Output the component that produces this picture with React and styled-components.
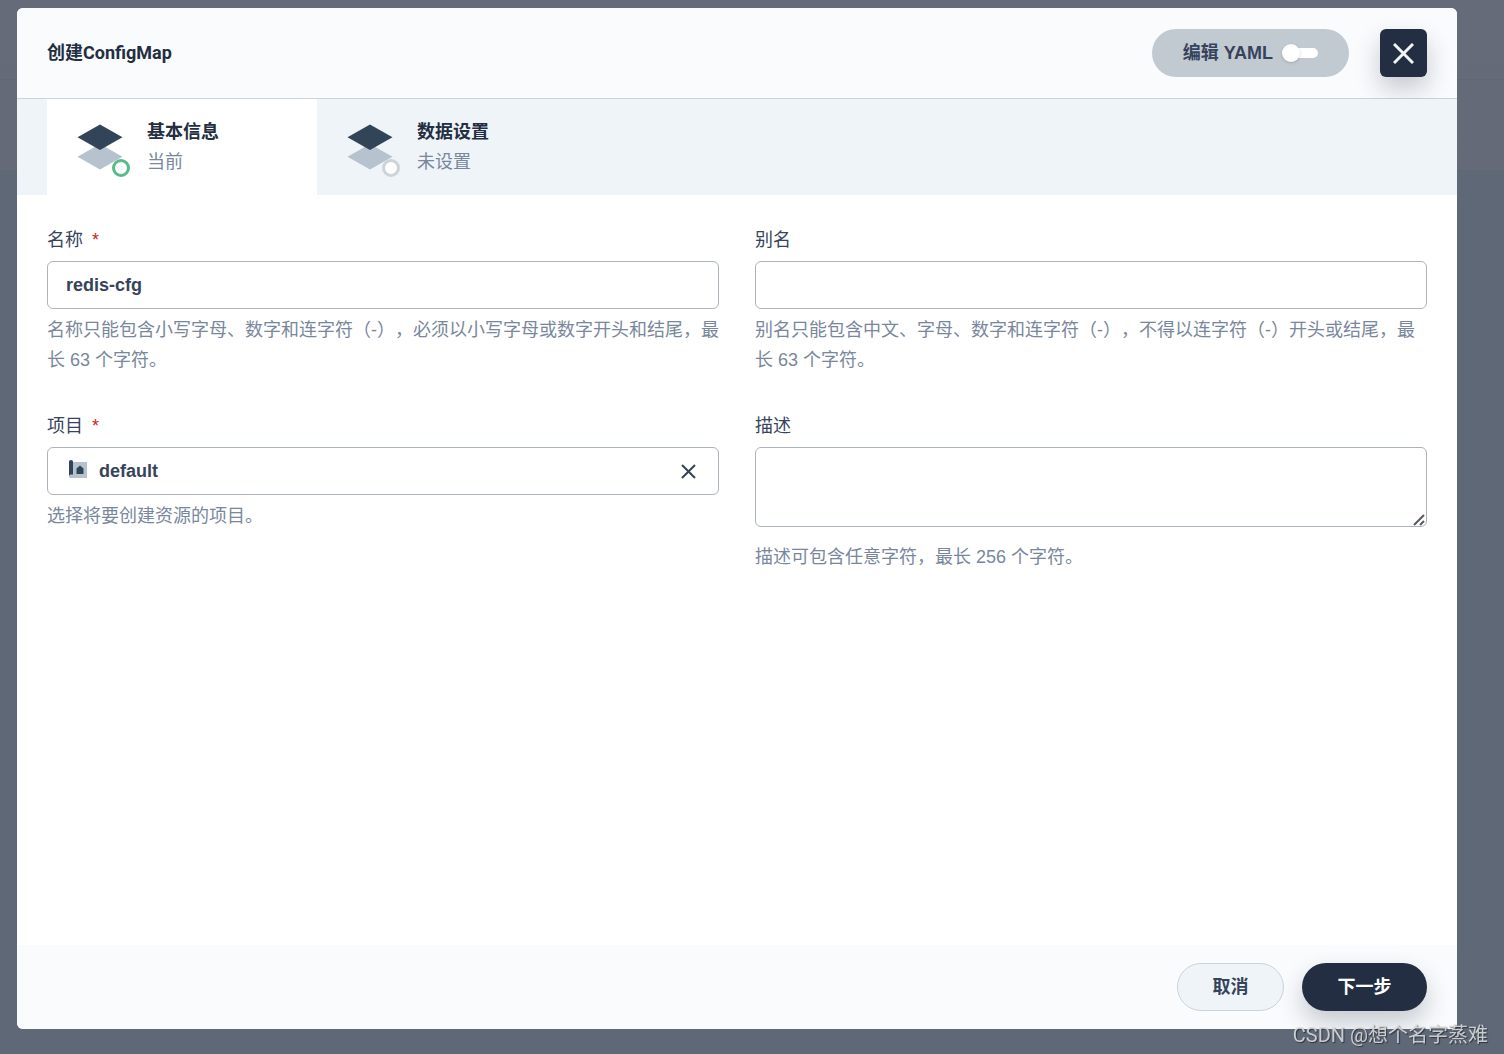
import React, { useState } from "react";
import styled, { createGlobalStyle } from "styled-components";

const GlobalStyle = createGlobalStyle`
  *, *::before, *::after { box-sizing: border-box; }
  html { text-spacing-trim: space-all; }
  body {
    margin: 0;
    color: #36435c;
    font-family: "Liberation Sans", "Noto Sans CJK SC", sans-serif;
    font-size: 18px;
    line-height: 30px;
  }
  button, input, select, textarea { font: inherit; color: inherit; margin: 0; }
`;

const Backdrop = styled.div`
  display: flex;
  min-height: 100vh;
  padding: 8px 47px 25px 17px;
  background-color: #5f6877;
  background-image:
    linear-gradient(#5f6675, #5f6675),
    linear-gradient(#666b79, #656a78),
    linear-gradient(#5c6473, #5f6877);
  background-size: 100% 1px, 100% 170px, 100% 180px;
  background-position: 0 79px, 0 0, 0 0;
  background-repeat: no-repeat;
`;

const Dialog = styled.form`
  flex: 1;
  min-width: 0;
  display: flex;
  flex-direction: column;
  overflow: hidden;
  border-radius: 6px;
  background: #fff;
`;

const Header = styled.header`
  display: flex;
  align-items: center;
  gap: 31px;
  padding: 21px 30px;
  border-bottom: 1px solid #ccd3db;
  background: #f9fbfd;
`;

const Title = styled.h1`
  flex: 1;
  margin: 0;
  color: #242e42;
  font-family: Roboto, "Noto Sans CJK SC", sans-serif;
  font-size: 18px;
  font-weight: 700;
`;

const YamlToggle = styled.label`
  display: flex;
  align-items: center;
  gap: 9px;
  height: 48px;
  padding: 0 31px;
  border-radius: 24px;
  background: #c1c9d1;
  font-weight: 700;
  cursor: pointer;
`;

const Switch = styled.input`
  appearance: none;
  position: relative;
  width: 36px;
  height: 18px;
  cursor: pointer;
  &::before {
    content: "";
    position: absolute;
    inset: 4px 0 4px 4px;
    border-radius: 5px;
    background: #fff;
  }
  &::after {
    content: "";
    position: absolute;
    top: 0;
    left: ${(p) => (p.checked ? "18px" : "0")};
    width: 18px;
    height: 18px;
    border-radius: 50%;
    background: #fff;
    box-shadow: 0 1px 3px rgba(36, 46, 66, 0.2);
  }
`;

const CloseButton = styled.button`
  display: flex;
  align-items: center;
  justify-content: center;
  width: 47px;
  height: 48px;
  padding: 0;
  border: 0;
  border-radius: 6px;
  background: #242e42;
  box-shadow: 0 12px 24px rgba(36, 46, 66, 0.24);
  cursor: pointer;
`;

const Steps = styled.nav`
  display: flex;
  padding: 0 30px;
  background: #eff4f9;
`;

const Step = styled.button`
  display: flex;
  align-items: center;
  gap: 24px;
  width: 270px;
  padding: 18px 30px;
  border: 0;
  background: ${(p) => (p.$current ? "#fff" : "transparent")};
  text-align: left;
  cursor: pointer;
`;

const StepText = styled.span`
  display: flex;
  flex-direction: column;
  color: #79879c;
`;

const StepName = styled.strong`
  color: #242e42;
  font-weight: 700;
`;

const StepSvg = styled.svg`
  display: block;
  overflow: visible;
`;

const Body = styled.main`
  flex: 1;
  display: grid;
  grid-template-columns: 1fr 1fr;
  align-content: start;
  gap: 36px;
  padding: 30px;
`;

const Field = styled.div`
  display: flex;
  flex-direction: column;
  gap: 6px;
  min-width: 0;
`;

const Label = styled.label`
  display: block;
`;

const Required = styled.span`
  margin-left: 9px;
  color: #ca2621;
`;

const Control = styled.div`
  position: relative;
  display: flex;
  ${(p) => p.$tall && "margin-bottom: 9px;"}
`;

const controlStyle = `
  display: block;
  width: 100%;
  border: 1px solid #abb4be;
  border-radius: 6px;
  background: #fff;
  font-weight: 700;
  outline: none;
  &:focus { border-color: #329dce; }
`;

const TextInput = styled.input`
  ${controlStyle}
  height: 48px;
  padding: 0 18px;
`;

const Select = styled.select`
  ${controlStyle}
  appearance: none;
  height: 48px;
  padding: 0 54px 0 51px;
`;

const TextArea = styled.textarea`
  ${controlStyle}
  height: 80px;
  padding: 9px 18px;
  resize: vertical;
  &::-webkit-resizer { background: transparent; }
`;

const Hint = styled.p`
  margin: 0;
  color: #79879c;
`;

const ProjectMark = styled.svg`
  position: absolute;
  left: 21px;
  top: 13px;
  pointer-events: none;
`;

const ClearButton = styled.button`
  position: absolute;
  right: 19px;
  top: 12px;
  display: flex;
  align-items: center;
  justify-content: center;
  width: 24px;
  height: 24px;
  padding: 0;
  border: 0;
  background: transparent;
  cursor: pointer;
`;

const Grip = styled.svg`
  position: absolute;
  right: 2px;
  bottom: 1px;
  pointer-events: none;
`;

const Footer = styled.footer`
  display: flex;
  justify-content: flex-end;
  gap: 18px;
  padding: 18px 30px;
  background: #f9fbfd;
`;

const ActionButton = styled.button`
  min-width: ${(p) => (p.$primary ? "125px" : "107px")};
  height: 48px;
  padding: 0 30px;
  border: ${(p) => (p.$primary ? "0" : "1px solid #ccd3db")};
  border-radius: 24px;
  background: ${(p) => (p.$primary ? "#242e42" : "#eff4f9")};
  color: ${(p) => (p.$primary ? "#fff" : "#36435c")};
  box-shadow: ${(p) => (p.$primary ? "0 12px 24px rgba(36, 46, 66, 0.24)" : "none")};
  font-weight: 700;
  cursor: pointer;
`;

const Watermark = styled.div`
  position: fixed;
  right: 16px;
  bottom: 4px;
  color: rgba(215, 217, 220, 0.9);
  font-family: Roboto, "Noto Sans CJK SC", sans-serif;
  font-size: 20px;
  text-shadow: 1px 1px 1px rgba(0, 0, 0, 0.5);
  pointer-events: none;
`;

function Cross({ size, width, color }) {
  const end = size - 1;
  return (
    <svg width={size} height={size} viewBox={`0 0 ${size} ${size}`} aria-hidden="true">
      <path d={`M1 1L${end} ${end}M${end} 1L1 ${end}`} stroke={color} strokeWidth={width} fill="none" />
    </svg>
  );
}

function StepIcon({ ring }) {
  return (
    <StepSvg width="46" height="46" viewBox="0 0 46 46" aria-hidden="true">
      <path d="M23 20L45.500 32.800L23 45.500L.5 32.800Z" fill="#b6c2cd" />
      <path d="M23 .5L45.500 13.300L23 26L.5 13.300Z" fill="#324558" />
      <circle cx="44" cy="44" r="7.500" fill="#fff" stroke={ring} strokeWidth="3" />
    </StepSvg>
  );
}

const steps = [
  { name: "基本信息", state: "当前", ring: "#55bc8a" },
  { name: "数据设置", state: "未设置", ring: "#ccd3db" },
];

export default function App() {
  const [yaml, setYaml] = useState(false);
  const [project, setProject] = useState("default");

  return (
    <>
      <GlobalStyle />
      <Backdrop>
        <Dialog onSubmit={(e) => e.preventDefault()}>
          <Header>
            <Title>创建ConfigMap</Title>
            <YamlToggle htmlFor="yaml">
              编辑 YAML
              <Switch id="yaml" type="checkbox" role="switch" checked={yaml} onChange={(e) => setYaml(e.target.checked)} />
            </YamlToggle>
            <CloseButton type="button" aria-label="关闭">
              <Cross size={21} width={3} color="#f1f3f5" />
            </CloseButton>
          </Header>

          <Steps>
            {steps.map((step, i) => (
              <Step key={step.name} type="button" $current={i === 0}>
                <StepIcon ring={step.ring} />
                <StepText>
                  <StepName>{step.name}</StepName>
                  <span>{step.state}</span>
                </StepText>
              </Step>
            ))}
          </Steps>

          <Body>
            <Field>
              <Label htmlFor="name">
                名称<Required>*</Required>
              </Label>
              <Control>
                <TextInput id="name" type="text" defaultValue="redis-cfg" />
              </Control>
              <Hint>名称只能包含小写字母、数字和连字符（-），必须以小写字母或数字开头和结尾，最长 63 个字符。</Hint>
            </Field>

            <Field>
              <Label htmlFor="alias">别名</Label>
              <Control>
                <TextInput id="alias" type="text" />
              </Control>
              <Hint>别名只能包含中文、字母、数字和连字符（-），不得以连字符（-）开头或结尾，最长 63 个字符。</Hint>
            </Field>

            <Field>
              <Label htmlFor="project">
                项目<Required>*</Required>
              </Label>
              <Control>
                <Select id="project" value={project} onChange={(e) => setProject(e.target.value)}>
                  <option value="" hidden />
                  <option value="default">default</option>
                </Select>
                <ProjectMark width="20" height="18" viewBox="0 0 20 18" aria-hidden="true">
                  <path d="M4 2H19V18H2.500A1.500 1.500 0 0 1 1 16.500V14H4Z" fill="#b6c2cd" />
                  <path d="M1 1.500Q1 0 3 0Q5 0 5 1.500V14.500H2.500L1 15.500Z" fill="#324558" />
                  <path d="M12 5.500L15.500 8.500V14H8.500V8.500Z" fill="#324558" />
                </ProjectMark>
                <ClearButton type="button" aria-label="清除" onClick={() => setProject("")}>
                  <Cross size={15} width={2} color="#324558" />
                </ClearButton>
              </Control>
              <Hint>选择将要创建资源的项目。</Hint>
            </Field>

            <Field>
              <Label htmlFor="description">描述</Label>
              <Control $tall>
                <TextArea id="description" />
                <Grip width="12" height="12" viewBox="0 0 12 12" aria-hidden="true">
                  <path d="M1 11L11 1M7 11L11 7" stroke="#5a5a5a" strokeWidth="2" />
                </Grip>
              </Control>
              <Hint>描述可包含任意字符，最长 256 个字符。</Hint>
            </Field>
          </Body>

          <Footer>
            <ActionButton type="button">取消</ActionButton>
            <ActionButton type="submit" $primary>下一步</ActionButton>
          </Footer>
        </Dialog>
      </Backdrop>
      <Watermark>CSDN @想个名字蒸难</Watermark>
    </>
  );
}
